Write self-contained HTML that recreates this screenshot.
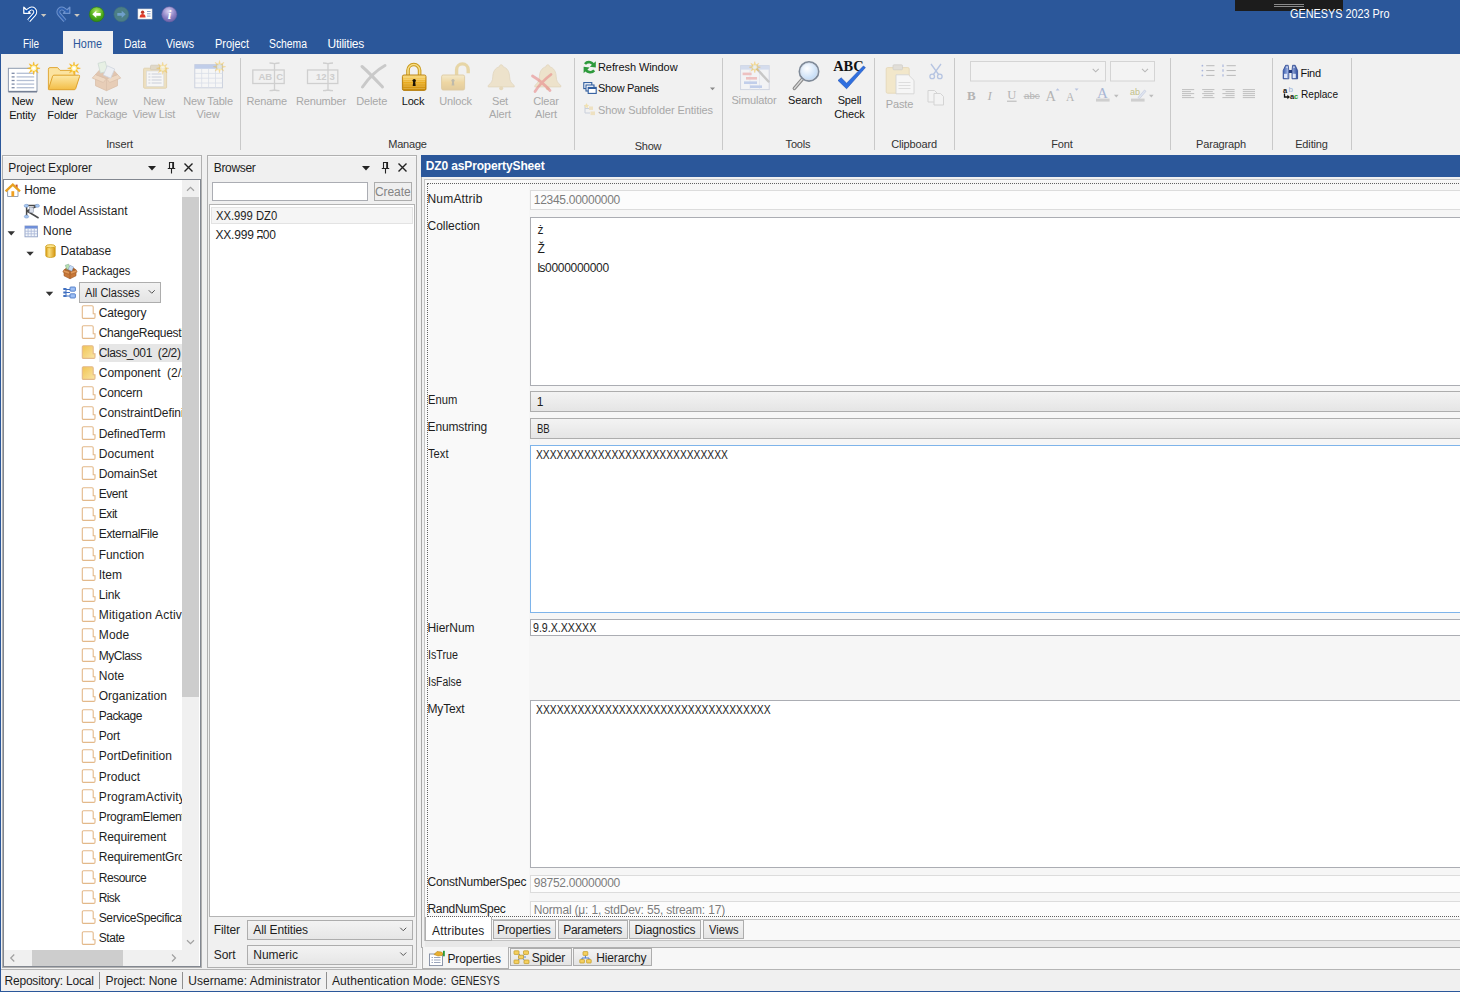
<!DOCTYPE html>
<html><head><meta charset="utf-8"><title>GENESYS 2023 Pro</title>
<style>
html,body{margin:0;padding:0}
body{width:1460px;height:992px;overflow:hidden;position:relative;background:#f0f0f0;font-family:"Liberation Sans","DejaVu Sans",sans-serif;font-size:12px;color:#1e1e1e}
div{position:absolute;box-sizing:border-box}
svg{position:absolute;overflow:visible}
.t{overflow:visible}
</style></head><body>
<div style="left:0px;top:0px;width:1460px;height:54px;background:#2b579a;"></div>
<div style="left:1234.5px;top:0px;width:108.5px;height:10.5px;background:#1c1c1c;"></div>
<div style="left:1274px;top:4px;width:30px;height:1px;background:#8a8a8a;"></div>
<div style="left:1274px;top:6px;width:30px;height:1px;background:#8a8a8a;"></div>
<div class="t" style="top:4.00px;height:20px;line-height:20px;color:#ffffff;font-size:12px;white-space:nowrap;transform:scaleX(0.9040);transform-origin:0 50%;left:1289.50px;">GENESYS 2023 Pro</div>
<div style="left:62.5px;top:31px;width:50.5px;height:24px;background:#f1f1f1;"></div>
<div class="t" style="top:33.50px;height:20px;line-height:20px;color:#fff;font-size:12px;white-space:nowrap;transform:scaleX(0.8275);transform-origin:0 50%;left:22.50px;">File</div>
<div class="t" style="top:33.50px;height:20px;line-height:20px;color:#2b579a;font-size:12px;white-space:nowrap;transform:scaleX(0.9060);transform-origin:0 50%;left:73.00px;">Home</div>
<div class="t" style="top:33.50px;height:20px;line-height:20px;color:#fff;font-size:12px;white-space:nowrap;transform:scaleX(0.8680);transform-origin:0 50%;left:123.50px;">Data</div>
<div class="t" style="top:33.50px;height:20px;line-height:20px;color:#fff;font-size:12px;white-space:nowrap;transform:scaleX(0.8807);transform-origin:0 50%;left:166.00px;">Views</div>
<div class="t" style="top:33.50px;height:20px;line-height:20px;color:#fff;font-size:12px;white-space:nowrap;transform:scaleX(0.9103);transform-origin:0 50%;left:214.50px;">Project</div>
<div class="t" style="top:33.50px;height:20px;line-height:20px;color:#fff;font-size:12px;white-space:nowrap;transform:scaleX(0.8632);transform-origin:0 50%;left:269.00px;">Schema</div>
<div class="t" style="top:33.50px;height:20px;line-height:20px;color:#fff;font-size:12px;white-space:nowrap;letter-spacing:-0.241px;left:327.50px;">Utilities</div>
<div style="left:0px;top:54px;width:1460px;height:101px;background:#f1f1f1;"></div>
<div style="left:240.0px;top:58px;width:1px;height:92px;background:#c9c9c9;"></div>
<div style="left:574.0px;top:58px;width:1px;height:92px;background:#c9c9c9;"></div>
<div style="left:722.0px;top:58px;width:1px;height:92px;background:#c9c9c9;"></div>
<div style="left:874.0px;top:58px;width:1px;height:92px;background:#c9c9c9;"></div>
<div style="left:953.5px;top:58px;width:1px;height:92px;background:#c9c9c9;"></div>
<div style="left:1170.0px;top:58px;width:1px;height:92px;background:#c9c9c9;"></div>
<div style="left:1272.0px;top:58px;width:1px;height:92px;background:#c9c9c9;"></div>
<div style="left:1350.5px;top:58px;width:1px;height:92px;background:#c9c9c9;"></div>
<div class="t" style="top:134.00px;height:20px;line-height:20px;color:#333333;font-size:11px;white-space:nowrap;letter-spacing:-0.133px;left:-30.50px;width:300px;text-align:center;">Insert</div>
<div class="t" style="top:134.00px;height:20px;line-height:20px;color:#333333;font-size:11px;white-space:nowrap;letter-spacing:-0.193px;left:257.50px;width:300px;text-align:center;">Manage</div>
<div class="t" style="top:136.00px;height:20px;line-height:20px;color:#333333;font-size:11px;white-space:nowrap;letter-spacing:-0.200px;left:498.00px;width:300px;text-align:center;">Show</div>
<div class="t" style="top:134.00px;height:20px;line-height:20px;color:#333333;font-size:11px;white-space:nowrap;letter-spacing:-0.149px;left:648.00px;width:300px;text-align:center;">Tools</div>
<div class="t" style="top:134.00px;height:20px;line-height:20px;color:#333333;font-size:11px;white-space:nowrap;letter-spacing:-0.152px;left:764.00px;width:300px;text-align:center;">Clipboard</div>
<div class="t" style="top:134.00px;height:20px;line-height:20px;color:#333333;font-size:11px;white-space:nowrap;letter-spacing:-0.160px;left:912.00px;width:300px;text-align:center;">Font</div>
<div class="t" style="top:134.00px;height:20px;line-height:20px;color:#333333;font-size:11px;white-space:nowrap;letter-spacing:-0.166px;left:1071.00px;width:300px;text-align:center;">Paragraph</div>
<div class="t" style="top:134.00px;height:20px;line-height:20px;color:#333333;font-size:11px;white-space:nowrap;letter-spacing:-0.140px;left:1161.50px;width:300px;text-align:center;">Editing</div>
<div class="t" style="top:91.00px;height:20px;line-height:20px;color:#111;font-size:11px;white-space:nowrap;letter-spacing:-0.213px;left:-127.50px;width:300px;text-align:center;">New</div>
<div class="t" style="top:105.00px;height:20px;line-height:20px;color:#111;font-size:11px;white-space:nowrap;letter-spacing:-0.133px;left:-127.50px;width:300px;text-align:center;">Entity</div>
<div class="t" style="top:91.00px;height:20px;line-height:20px;color:#111;font-size:11px;white-space:nowrap;letter-spacing:-0.213px;left:-87.50px;width:300px;text-align:center;">New</div>
<div class="t" style="top:105.00px;height:20px;line-height:20px;color:#111;font-size:11px;white-space:nowrap;letter-spacing:-0.151px;left:-87.50px;width:300px;text-align:center;">Folder</div>
<div class="t" style="top:91.00px;height:20px;line-height:20px;color:#a8a8a8;font-size:11px;white-space:nowrap;letter-spacing:-0.213px;left:-43.50px;width:300px;text-align:center;">New</div>
<div class="t" style="top:104.20px;height:20px;line-height:20px;color:#a8a8a8;font-size:11px;white-space:nowrap;letter-spacing:-0.178px;left:-43.50px;width:300px;text-align:center;">Package</div>
<div class="t" style="top:91.00px;height:20px;line-height:20px;color:#a8a8a8;font-size:11px;white-space:nowrap;letter-spacing:-0.213px;left:4.00px;width:300px;text-align:center;">New</div>
<div class="t" style="top:104.20px;height:20px;line-height:20px;color:#a8a8a8;font-size:11px;white-space:nowrap;letter-spacing:-0.142px;left:4.00px;width:300px;text-align:center;">View List</div>
<div class="t" style="top:91.00px;height:20px;line-height:20px;color:#a8a8a8;font-size:11px;white-space:nowrap;letter-spacing:-0.165px;left:58.00px;width:300px;text-align:center;">New Table</div>
<div class="t" style="top:104.20px;height:20px;line-height:20px;color:#a8a8a8;font-size:11px;white-space:nowrap;letter-spacing:-0.172px;left:58.00px;width:300px;text-align:center;">View</div>
<div class="t" style="top:91.00px;height:20px;line-height:20px;color:#a8a8a8;font-size:11px;white-space:nowrap;letter-spacing:-0.202px;left:116.75px;width:300px;text-align:center;">Rename</div>
<div class="t" style="top:91.00px;height:20px;line-height:20px;color:#a8a8a8;font-size:11px;white-space:nowrap;letter-spacing:-0.187px;left:171.00px;width:300px;text-align:center;">Renumber</div>
<div class="t" style="top:91.00px;height:20px;line-height:20px;color:#a8a8a8;font-size:11px;white-space:nowrap;letter-spacing:-0.154px;left:221.75px;width:300px;text-align:center;">Delete</div>
<div class="t" style="top:91.00px;height:20px;line-height:20px;color:#111;font-size:11px;white-space:nowrap;letter-spacing:-0.169px;left:263.00px;width:300px;text-align:center;">Lock</div>
<div class="t" style="top:91.00px;height:20px;line-height:20px;color:#a8a8a8;font-size:11px;white-space:nowrap;letter-spacing:-0.163px;left:305.60px;width:300px;text-align:center;">Unlock</div>
<div class="t" style="top:91.00px;height:20px;line-height:20px;color:#a8a8a8;font-size:11px;white-space:nowrap;letter-spacing:-0.160px;left:350.00px;width:300px;text-align:center;">Set</div>
<div class="t" style="top:104.20px;height:20px;line-height:20px;color:#a8a8a8;font-size:11px;white-space:nowrap;letter-spacing:-0.132px;left:350.00px;width:300px;text-align:center;">Alert</div>
<div class="t" style="top:91.00px;height:20px;line-height:20px;color:#a8a8a8;font-size:11px;white-space:nowrap;letter-spacing:-0.153px;left:396.00px;width:300px;text-align:center;">Clear</div>
<div class="t" style="top:104.20px;height:20px;line-height:20px;color:#a8a8a8;font-size:11px;white-space:nowrap;letter-spacing:-0.132px;left:396.00px;width:300px;text-align:center;">Alert</div>
<div class="t" style="top:57.00px;height:20px;line-height:20px;color:#111;font-size:11px;white-space:nowrap;letter-spacing:-0.085px;left:598.00px;">Refresh Window</div>
<div class="t" style="top:78.25px;height:20px;line-height:20px;color:#111;font-size:11px;white-space:nowrap;letter-spacing:-0.314px;left:598.00px;">Show Panels</div>
<div class="t" style="top:99.50px;height:20px;line-height:20px;color:#a8a8a8;font-size:11px;white-space:nowrap;letter-spacing:-0.078px;left:598.00px;">Show Subfolder Entities</div>
<div class="t" style="top:90.00px;height:20px;line-height:20px;color:#a8a8a8;font-size:11px;white-space:nowrap;letter-spacing:-0.150px;left:604.00px;width:300px;text-align:center;">Simulator</div>
<div class="t" style="top:90.00px;height:20px;line-height:20px;color:#111;font-size:11px;white-space:nowrap;letter-spacing:-0.169px;left:655.00px;width:300px;text-align:center;">Search</div>
<div class="t" style="top:90.00px;height:20px;line-height:20px;color:#111;font-size:11px;white-space:nowrap;letter-spacing:-0.142px;left:699.50px;width:300px;text-align:center;">Spell</div>
<div class="t" style="top:103.50px;height:20px;line-height:20px;color:#111;font-size:11px;white-space:nowrap;letter-spacing:-0.181px;left:699.50px;width:300px;text-align:center;">Check</div>
<div class="t" style="top:94.00px;height:20px;line-height:20px;color:#a8a8a8;font-size:11px;white-space:nowrap;letter-spacing:-0.164px;left:749.50px;width:300px;text-align:center;">Paste</div>
<div class="t" style="top:63.00px;height:20px;line-height:20px;color:#111;font-size:11px;white-space:nowrap;letter-spacing:-0.287px;left:1300.50px;">Find</div>
<div class="t" style="top:84.00px;height:20px;line-height:20px;color:#111;font-size:11px;white-space:nowrap;transform:scaleX(0.9168);transform-origin:0 50%;left:1300.50px;">Replace</div>
<svg style="left:0;top:0" width="1460" height="155" viewBox="0 0 1460 155"><defs>
<linearGradient id="gold" x1="0" y1="0" x2="0" y2="1"><stop offset="0" stop-color="#fbe08a"/><stop offset="0.5" stop-color="#e9a91c"/><stop offset="1" stop-color="#c98a0c"/></linearGradient>
<linearGradient id="fold" x1="0" y1="0" x2="0" y2="1"><stop offset="0" stop-color="#fde9a8"/><stop offset="1" stop-color="#f3bd45"/></linearGradient>
<radialGradient id="grn" cx="0.5" cy="0.3" r="0.7"><stop offset="0" stop-color="#b6e86a"/><stop offset="0.6" stop-color="#4fae1c"/><stop offset="1" stop-color="#2f8a12"/></radialGradient>
<radialGradient id="pur" cx="0.45" cy="0.3" r="0.7"><stop offset="0" stop-color="#d9d2f2"/><stop offset="0.6" stop-color="#8f84c6"/><stop offset="1" stop-color="#6d62a8"/></radialGradient>
<radialGradient id="lens" cx="0.4" cy="0.35" r="0.7"><stop offset="0" stop-color="#ffffff"/><stop offset="1" stop-color="#b9d6f5"/></radialGradient>
</defs><g opacity="1" fill="none" stroke-linejoin="round"><path d="M28.700 20.700L34.300 14.400A3.500 3.500 0 0 0 29.200 9.600L27.500 11" stroke="#fff" stroke-width="3.900"/><polygon points="23.800,7.300 23.800,13.300 30.200,13.300" fill="#0d4ca8" stroke="#fff" stroke-width="1.300"/><path d="M28.700 20.700L34.300 14.400A3.500 3.500 0 0 0 29.200 9.600L26.500 11.500" stroke="#0d4ca8" stroke-width="1.900"/></g><g transform="translate(93.6,0) scale(-1,1)" opacity="1" fill="none" stroke-linejoin="round"><path d="M28.700 20.700L34.300 14.400A3.500 3.500 0 0 0 29.200 9.600L27.500 11" stroke="#6d92cd" stroke-width="3.900"/><polygon points="23.800,7.300 23.800,13.300 30.200,13.300" fill="#2f60ae" stroke="#6d92cd" stroke-width="1.300"/><path d="M28.700 20.700L34.300 14.400A3.500 3.500 0 0 0 29.200 9.600L26.500 11.500" stroke="#2f60ae" stroke-width="1.900"/></g><polygon points="40.900,13.900 46.400,13.900 43.650,17" fill="#cbc7bf"/><polygon points="74.200,13.900 79.800,13.900 77,17" fill="#cbc7bf"/><circle cx="96.7" cy="14.3" r="7.4" fill="url(#grn)" stroke="#2c7a12" stroke-width="0.6"/><path d="M92.3 14.3l4-3.6v2.2h4.4v2.8h-4.4v2.2z" fill="#fff"/><circle cx="121.3" cy="14.3" r="7.4" fill="#4b7e86" stroke="#3f6f7c" stroke-width="0.6"/><path d="M125.7 14.3l-4-3.6v2.2h-4.4v2.8h4.4v2.2z" fill="#6e9fca"/><rect x="138" y="9" width="14" height="10" fill="#fff" stroke="#d8d8d8" stroke-width="0.6"/><circle cx="142.6" cy="12.2" r="1.7" fill="#c0392b"/><path d="M139.6 17.6c0-2.6 1.2-3.6 3-3.6s3 1 3 3.6z" fill="#e03a2a"/><path d="M147 11.5h3.6M147 13.8h3.6M147 16.1h3.6" stroke="#8aa0c8" stroke-width="1"/><circle cx="169.3" cy="14.3" r="7.6" fill="url(#pur)" stroke="#6a60a0" stroke-width="0.5"/><text x="169.6" y="19" font-family="Liberation Serif,serif" font-size="13" font-style="italic" font-weight="bold" fill="#fff" text-anchor="middle">i</text><rect x="8.4" y="68.3" width="28.6" height="23" fill="#fff" stroke="#8e9bb0" stroke-width="1"/><path d="M8.4 91.8h28.6" stroke="#6f7a90" stroke-width="1.4"/><path d="M11.6 73.3h3" stroke="#7f8ca8" stroke-width="1.3"/><path d="M16.6 73.3h17.6" stroke="#b4bfd4" stroke-width="1.3"/><path d="M11.6 76.89999999999999h3" stroke="#7f8ca8" stroke-width="1.3"/><path d="M16.6 76.89999999999999h17.6" stroke="#b4bfd4" stroke-width="1.3"/><path d="M11.6 80.5h3" stroke="#7f8ca8" stroke-width="1.3"/><path d="M16.6 80.5h17.6" stroke="#b4bfd4" stroke-width="1.3"/><path d="M11.6 84.1h3" stroke="#7f8ca8" stroke-width="1.3"/><path d="M16.6 84.1h17.6" stroke="#b4bfd4" stroke-width="1.3"/><path d="M11.6 87.7h3" stroke="#7f8ca8" stroke-width="1.3"/><path d="M16.6 87.7h17.6" stroke="#b4bfd4" stroke-width="1.3"/><g opacity="1"><polygon points="33.70,61.90 34.73,65.82 38.23,63.77 36.18,67.27 40.10,68.30 36.18,69.33 38.23,72.83 34.73,70.78 33.70,74.70 32.67,70.78 29.17,72.83 31.22,69.33 27.30,68.30 31.22,67.27 29.17,63.77 32.67,65.82" fill="#f9c623" stroke="#f0a818" stroke-width="0.4"/><circle cx="33.7" cy="68.3" r="2.69" fill="#fff7c0"/><circle cx="33.7" cy="68.3" r="1.41" fill="#fff"/></g><path d="M48.4 88.6V69.2a1.6 1.6 0 0 1 1.6-1.6h7.6l2.4 2.8h13.4a1.4 1.4 0 0 1 1.4 1.4v3.4" fill="#fbe3a0" stroke="#e0a838" stroke-width="1"/><path d="M48.4 89.4l4.2-13.2a1.5 1.5 0 0 1 1.4-1h24.6a1 1 0 0 1 .95 1.3l-3.9 12.2a1.5 1.5 0 0 1-1.4 1H49.2a.8 .8 0 0 1-.8-.3z" fill="url(#fold)" stroke="#dfa22c" stroke-width="1"/><g opacity="1"><polygon points="74.00,61.90 75.03,65.82 78.53,63.77 76.48,67.27 80.40,68.30 76.48,69.33 78.53,72.83 75.03,70.78 74.00,74.70 72.97,70.78 69.47,72.83 71.52,69.33 67.60,68.30 71.52,67.27 69.47,63.77 72.97,65.82" fill="#f9c623" stroke="#f0a818" stroke-width="0.4"/><circle cx="74" cy="68.3" r="2.69" fill="#fff7c0"/><circle cx="74" cy="68.3" r="1.41" fill="#fff"/></g><g opacity="0.38"><path d="M95.5 74.5l11 4.2 11-4.2v11.2l-11 5-11-5z" fill="#d9935a" stroke="#b8733c" stroke-width="0.8"/><path d="M106.5 78.7v12" stroke="#b8733c" stroke-width="0.8"/><path d="M95.5 74.5l-3.2 3.6 11 4.4 3.2-3.8zM117.5 74.5l3.2 3.6-11 4.4-3.2-3.8z" fill="#eab07a" stroke="#b8733c" stroke-width="0.8"/><path d="M95.5 74.5l4-4.4 7 2.6 7-2.6 4 4.4-11 4.2z" fill="#c88048" stroke="#b8733c" stroke-width="0.8"/><rect x="99" y="62.5" width="7.5" height="10" fill="#d8f0d0" stroke="#8fb0a0" stroke-width="0.7" transform="rotate(-14 102 67)"/><rect x="105" y="67" width="8" height="10" fill="#e8eef8" stroke="#9aa8c0" stroke-width="0.7" transform="rotate(24 109 72)"/></g><g opacity="0.4"><rect x="143.6" y="68.2" width="23" height="20" rx="1" fill="#e8c878" stroke="#c8a04c" stroke-width="0.9"/><rect x="150.5" y="65.2" width="9" height="4.6" rx="1" fill="#c9b48a" stroke="#a08a5c" stroke-width="0.7"/><rect x="146.4" y="71" width="17.4" height="15.4" fill="#fff" stroke="#b0b0b0" stroke-width="0.6"/><path d="M148.4 74h2M151.6 74h10M148.4 77h2M151.6 77h10M148.4 80h2M151.6 80h10M148.4 83h2M151.6 83h10" stroke="#8f9bb5" stroke-width="1"/></g><g opacity="0.45"><polygon points="162.70,62.10 163.70,65.89 167.08,63.92 165.11,67.30 168.90,68.30 165.11,69.30 167.08,72.68 163.70,70.71 162.70,74.50 161.70,70.71 158.32,72.68 160.29,69.30 156.50,68.30 160.29,67.30 158.32,63.92 161.70,65.89" fill="#f9c623" stroke="#f0a818" stroke-width="0.4"/><circle cx="162.7" cy="68.3" r="2.60" fill="#fff7c0"/><circle cx="162.7" cy="68.3" r="1.36" fill="#fff"/></g><g opacity="0.42"><rect x="194.8" y="64.6" width="27.6" height="23.2" fill="#fff" stroke="#8f9ec0" stroke-width="0.9"/><rect x="194.8" y="64.6" width="27.6" height="4.2" fill="#7f9ee0"/><path d="M194.8 73.4h27.6M194.8 78.2h27.6M194.8 83h27.6M201.7 68.8v19M208.6 68.8v19M215.5 68.8v19" stroke="#b8c4dc" stroke-width="0.8"/></g><g opacity="0.45"><polygon points="219.50,60.50 220.50,64.29 223.88,62.32 221.91,65.70 225.70,66.70 221.91,67.70 223.88,71.08 220.50,69.11 219.50,72.90 218.50,69.11 215.12,71.08 217.09,67.70 213.30,66.70 217.09,65.70 215.12,62.32 218.50,64.29" fill="#f9c623" stroke="#f0a818" stroke-width="0.4"/><circle cx="219.5" cy="66.7" r="2.60" fill="#fff7c0"/><circle cx="219.5" cy="66.7" r="1.36" fill="#fff"/></g><g stroke="#cfcfcf" fill="none" stroke-width="1.3"><rect x="252.8" y="70" width="31.399999999999977" height="13.5"/><path d="M274.5 63.6v26.4M274.5 63.6c-1.5-.4-3-.6-5-.6M274.5 63.6c1.5-.4 3-.6 5-.6M274.5 90c-1.5 .4-3 .6-5 .6M274.5 90c1.5 .4 3 .6 5 .6"/></g><g stroke="#cfcfcf" fill="none" stroke-width="1.3"><rect x="307.5" y="70" width="30.30000000000001" height="13.5"/><path d="M328 63.6v26.4M328 63.6c-1.5-.4-3-.6-5-.6M328 63.6c1.5-.4 3-.6 5-.6M328 90c-1.5 .4-3 .6-5 .6M328 90c1.5 .4 3 .6 5 .6"/></g><text x="258.5" y="80.4" font-size="9.5" font-weight="bold" fill="#cdcdcd" font-family="Liberation Sans,sans-serif">AB</text><text x="276.2" y="80.4" font-size="9.5" font-weight="bold" fill="#cdcdcd" font-family="Liberation Sans,sans-serif">C</text><text x="316" y="80.4" font-size="9.5" font-weight="bold" fill="#cdcdcd" font-family="Liberation Sans,sans-serif">12</text><text x="329.6" y="80.4" font-size="9.5" font-weight="bold" fill="#cdcdcd" font-family="Liberation Sans,sans-serif">3</text><path d="M362 66.5c7 6 13 12.5 20.5 20.5M385 65.5c-9 5-16 12-22.5 21.5" stroke="#c9c9c9" stroke-width="3" stroke-linecap="round" fill="none"/><path d="M408 75.5v-5.2a5.8 5.8 0 0 1 11.6 0v5.2" fill="none" stroke="#c99a1c" stroke-width="3.6"/><path d="M408 75.5v-5.2a5.8 5.8 0 0 1 11.6 0v5.2" fill="none" stroke="#f7dd86" stroke-width="1.6"/><rect x="402.4" y="75" width="23.6" height="15.4" rx="1.6" fill="url(#gold)" stroke="#b47a08" stroke-width="0.9"/><path d="M403.4 77.3h21.6" stroke="#f9e29a" stroke-width="0.5" opacity="0.8"/><path d="M403.4 79.5h21.6" stroke="#f9e29a" stroke-width="0.5" opacity="0.8"/><path d="M403.4 81.7h21.6" stroke="#f9e29a" stroke-width="0.5" opacity="0.8"/><path d="M403.4 83.89999999999999h21.6" stroke="#f9e29a" stroke-width="0.5" opacity="0.8"/><path d="M403.4 86.1h21.6" stroke="#f9e29a" stroke-width="0.5" opacity="0.8"/><path d="M403.4 88.3h21.6" stroke="#f9e29a" stroke-width="0.5" opacity="0.8"/><circle cx="414.2" cy="80.6" r="1.7" fill="#1a1205"/><path d="M413.3 81h1.8l.6 5h-3z" fill="#1a1205"/><g opacity="0.36"><path d="M456.6 75.5v-5.8a5.8 5.8 0 0 1 11.6 0v3.6" fill="none" stroke="#d8a828" stroke-width="3.4"/><rect x="441.6" y="75" width="23" height="15" rx="1.6" fill="url(#gold)" stroke="#c08a18" stroke-width="0.9"/><circle cx="453" cy="80.6" r="1.6" fill="#6a5a30"/><path d="M452.2 81h1.6l.6 4.6h-2.8z" fill="#6a5a30"/></g><g opacity="0.42"><path d="M501.2 64.8c1.2 0 1.8 .9 1.8 1.9c4.6 1.4 6.4 5.2 6.6 10.2c.1 4 1.6 6.2 4.6 8.6v1.4h-26v-1.4c3-2.4 4.5-4.6 4.6-8.6c.2-5 2-8.8 6.6-10.2c0-1 .6-1.900 1.800-1.900z" fill="#e8cf98" stroke="#cdb078" stroke-width="0.8"/><circle cx="501.2" cy="88.300" r="2" fill="#d8b870"/></g><g opacity="0.42"><path d="M547.8 64.8c1.2 0 1.8 .9 1.8 1.9c4.6 1.4 6.4 5.2 6.6 10.2c.1 4 1.6 6.2 4.6 8.6v1.4h-26v-1.4c3-2.4 4.5-4.6 4.6-8.6c.2-5 2-8.8 6.6-10.2c0-1 .6-1.900 1.800-1.900z" fill="#e8cf98" stroke="#cdb078" stroke-width="0.8"/><circle cx="547.8" cy="88.300" r="2" fill="#d8b870"/></g><path d="M532.5 76c6 3.500 12 8.500 17.500 14.500M551 74.500c-6 4.500-11.500 10-16 17" stroke="#e88888" stroke-width="2.800" stroke-linecap="round" fill="none" opacity="0.600"/><path d="M593.800 66.200a5 5 0 0 0-8.800-2.200" fill="none" stroke="#2e9a3c" stroke-width="2.600"/><polygon points="595.800,61.200 595.800,67.600 589.800,66.800" fill="#2e9a3c"/><path d="M585.400 68.200a5 5 0 0 0 8.800 2.200" fill="none" stroke="#2e9a3c" stroke-width="2.600"/><polygon points="583.600,73.200 583.600,66.800 589.600,67.600" fill="#2e9a3c"/><g fill="#fff" stroke="#2f5c9e" stroke-width="1.100"><rect x="583.800" y="82.600" width="8" height="6"/><rect x="586" y="85" width="8" height="6"/><rect x="588.200" y="87.400" width="8" height="6"/></g><path d="M588.200 88.200h8" stroke="#2f5c9e" stroke-width="1.600"/><polygon points="710,87.400 715,87.400 712.500,90.200" fill="#8a8a8a"/><g opacity="0.320"><path d="M585 105v8h5M585 108.500h4" stroke="#7a8cb0" stroke-width="1" fill="none"/><rect x="589" y="106.500" width="4" height="3.400" fill="#e8c060"/><rect x="590.500" y="111.500" width="4.500" height="3.600" fill="#e8c060"/><path d="M586.500 103l.8 1.800 1.800.4-1.400 1.200.3 1.800-1.500-1-1.500 1 .3-1.800-1.400-1.200 1.800-.4z" fill="#f0c030"/></g><g opacity="0.400"><rect x="740.600" y="65.600" width="28.600" height="24" fill="#f4f6fb" stroke="#9aa8c8" stroke-width="0.900"/><rect x="740.600" y="65.600" width="28.600" height="4" fill="#a9bde8"/><path d="M750 69.600v20M759.500 69.600v20" stroke="#c8d2e8" stroke-width="0.700"/><rect x="742.600" y="72.600" width="9" height="2.600" fill="#e87a7a"/><rect x="746" y="77" width="11" height="2.600" fill="#e87a7a"/><rect x="744" y="81.400" width="13" height="2.600" fill="#7a9be0"/><rect x="750" y="85.400" width="12" height="2.600" fill="#7a9be0"/><path d="M757 69l11.500 12.500" stroke="#8a8a8a" stroke-width="2.400" stroke-linecap="round"/></g><g opacity="0.5"><polygon points="754.80,61.60 755.70,65.03 758.76,63.24 756.97,66.30 760.40,67.20 756.97,68.10 758.76,71.16 755.70,69.37 754.80,72.80 753.90,69.37 750.84,71.16 752.63,68.10 749.20,67.20 752.63,66.30 750.84,63.24 753.90,65.03" fill="#f9c623" stroke="#f0a818" stroke-width="0.4"/><circle cx="754.8" cy="67.2" r="2.35" fill="#fff7c0"/><circle cx="754.8" cy="67.2" r="1.23" fill="#fff"/></g><path d="M802.600 78.800l-8.200 9.600" stroke="#8a8a8a" stroke-width="3.600" stroke-linecap="round"/><path d="M802.600 78.800l-8.200 9.600" stroke="#d8d8d8" stroke-width="1.400" stroke-linecap="round"/><circle cx="809" cy="71.400" r="9.600" fill="url(#lens)" stroke="#7f8a98" stroke-width="1.800"/><circle cx="809" cy="71.400" r="8.400" fill="none" stroke="#d5dde8" stroke-width="0.800"/><text x="833.200" y="71.400" font-family="Liberation Serif,serif" font-weight="bold" font-size="13.800" fill="#111" textLength="30.400" lengthAdjust="spacingAndGlyphs">ABC</text><path d="M838 80.400l3.200-2.600 5.400 5.400 16.800-17.200 2 1.600-18.800 21.200z" fill="#2f6fe0" stroke="#1f4fb0" stroke-width="0.600"/><g opacity="0.380"><rect x="886.200" y="67.600" width="23" height="25.600" rx="1.400" fill="#f4d98c" stroke="#d4b060" stroke-width="0.900"/><rect x="893" y="64.800" width="9.500" height="5" rx="1" fill="#c8c0b0" stroke="#9a9488" stroke-width="0.700"/><path d="M896 74.800h12.400l5.600 5.600v13.400h-18z" fill="#fff" stroke="#a0a0a0" stroke-width="0.800"/><path d="M898.500 82.500h12M898.500 85.500h12M898.500 88.500h12" stroke="#b8b8b8" stroke-width="0.900"/></g><g opacity="0.450" fill="none" stroke="#6f8fd0" stroke-width="1.300"><path d="M931 64l7.600 10.500M941 64l-7.600 10.500"/><circle cx="932.200" cy="76.400" r="2.300"/><circle cx="939.800" cy="76.400" r="2.300"/></g><g opacity="0.500" fill="#f6f6f6" stroke="#b8b8b8" stroke-width="1"><path d="M928 90.500h6.500l3 3v8.500h-9.500z"/><path d="M934 93.500h6.500l3 3v8.500h-9.500z"/></g><rect x="970.500" y="61.500" width="135" height="19.500" fill="#f3f3f3" stroke="#d4d4d4" stroke-width="1"/><rect x="1110.500" y="61.500" width="44" height="19.500" fill="#f3f3f3" stroke="#d4d4d4" stroke-width="1"/><polyline points="1092.700,68.800 1095.700,71.800 1098.700,68.800" fill="none" stroke="#b8b8b8" stroke-width="1.100"/><polyline points="1142,68.800 1145,71.800 1148,68.800" fill="none" stroke="#b8b8b8" stroke-width="1.100"/><text x="967" y="99.600" font-family="Liberation Serif,serif" font-weight="bold" font-size="13" fill="#b4b4b4">B</text><text x="987.500" y="99.600" font-family="Liberation Serif,serif" font-style="italic" font-size="13" fill="#b4b4b4">I</text><text x="1007.200" y="99" font-family="Liberation Serif,serif" font-size="12.500" fill="#b4b4b4">U</text><path d="M1007 101.200h9.600" stroke="#b4b4b4" stroke-width="1"/><text x="1024" y="99.400" font-family="Liberation Sans,sans-serif" font-size="9.600" fill="#b4b4b4" textLength="15.600" lengthAdjust="spacingAndGlyphs">abc</text><path d="M1023.600 96.400h16.400" stroke="#b4b4b4" stroke-width="0.900"/><text x="1045.600" y="101" font-family="Liberation Serif,serif" font-size="14.500" fill="#b4b4b4">A</text><polygon points="1055.600,90.400 1059.600,90.400 1057.600,88.200" fill="#b8c4e0"/><text x="1066" y="101" font-family="Liberation Serif,serif" font-size="11.500" fill="#b4b4b4">A</text><polygon points="1074.600,88.600 1078.600,88.600 1076.600,90.800" fill="#b8c4e0"/><text x="1097" y="97.800" font-family="Liberation Serif,serif" font-size="15" fill="#a9b6d4">A</text><rect x="1096" y="98.600" width="13.600" height="3" fill="#cfcfcf"/><polygon points="1114,94.800 1118.600,94.800 1116.300,97.400" fill="#bcbcbc"/><text x="1130" y="94.600" font-family="Liberation Sans,sans-serif" font-size="9" fill="#c2c08a">ab</text><path d="M1138 97.500l6.500-7.500 1.500 1.300-6.500 7.500z" fill="#dfe4f0" stroke="#c0c8dc" stroke-width="0.600"/><rect x="1131" y="98.600" width="13.600" height="3" fill="#cfcfcf"/><polygon points="1149,94.800 1153.600,94.800 1151.300,97.400" fill="#bcbcbc"/><circle cx="1202.400" cy="65.7" r="0.900" fill="#a9b6dc"/><path d="M1206.200 65.7h8.300" stroke="#b9b9b9" stroke-width="1"/><path d="M1223 64.5v2.4" stroke="#a9b6dc" stroke-width="1.200"/><path d="M1226.600 65.7h9.200" stroke="#b9b9b9" stroke-width="1"/><circle cx="1202.400" cy="70.55" r="0.900" fill="#a9b6dc"/><path d="M1206.200 70.55h8.300" stroke="#b9b9b9" stroke-width="1"/><path d="M1223 69.35v2.4" stroke="#a9b6dc" stroke-width="1.200"/><path d="M1226.600 70.55h9.200" stroke="#b9b9b9" stroke-width="1"/><circle cx="1202.400" cy="75.4" r="0.900" fill="#a9b6dc"/><path d="M1206.200 75.4h8.300" stroke="#b9b9b9" stroke-width="1"/><path d="M1223 74.2v2.4" stroke="#a9b6dc" stroke-width="1.200"/><path d="M1226.600 75.4h9.200" stroke="#b9b9b9" stroke-width="1"/><path d="M1182.0 89.6h12.2" stroke="#b9b9b9" stroke-width="0.900"/><path d="M1182.0 91.6h9.0" stroke="#b9b9b9" stroke-width="0.900"/><path d="M1182.0 93.6h12.2" stroke="#b9b9b9" stroke-width="0.900"/><path d="M1182.0 95.6h9.0" stroke="#b9b9b9" stroke-width="0.900"/><path d="M1182.0 97.6h12.2" stroke="#b9b9b9" stroke-width="0.900"/><path d="M1202.2 89.6h12.2" stroke="#b9b9b9" stroke-width="0.900"/><path d="M1203.8 91.6h9.0" stroke="#b9b9b9" stroke-width="0.900"/><path d="M1202.2 93.6h12.2" stroke="#b9b9b9" stroke-width="0.900"/><path d="M1203.8 95.6h9.0" stroke="#b9b9b9" stroke-width="0.900"/><path d="M1202.2 97.6h12.2" stroke="#b9b9b9" stroke-width="0.900"/><path d="M1222.4 89.6h12.2" stroke="#b9b9b9" stroke-width="0.900"/><path d="M1225.6 91.6h9.0" stroke="#b9b9b9" stroke-width="0.900"/><path d="M1222.4 93.6h12.2" stroke="#b9b9b9" stroke-width="0.900"/><path d="M1225.6 95.6h9.0" stroke="#b9b9b9" stroke-width="0.900"/><path d="M1222.4 97.6h12.2" stroke="#b9b9b9" stroke-width="0.900"/><path d="M1242.8 89.6h12.2" stroke="#b9b9b9" stroke-width="0.900"/><path d="M1242.8 91.6h12.2" stroke="#b9b9b9" stroke-width="0.900"/><path d="M1242.8 93.6h12.2" stroke="#b9b9b9" stroke-width="0.900"/><path d="M1242.8 95.6h12.2" stroke="#b9b9b9" stroke-width="0.900"/><path d="M1242.8 97.6h12.2" stroke="#b9b9b9" stroke-width="0.900"/><defs><linearGradient id="bino" x1="0" y1="0" x2="1" y2="0"><stop offset="0" stop-color="#3a5cb0"/><stop offset="0.450" stop-color="#c9d8f6"/><stop offset="1" stop-color="#2c4a9c"/></linearGradient></defs><path d="M1285.600 65.300h2.600l0.600 5.200v8.300h-5.600v-8.300zM1292.600 65.300h2.600l2.400 5.200v8.300h-5.600v-8.300z" fill="url(#bino)" stroke="#2a448e" stroke-width="0.800" stroke-linejoin="round"/><rect x="1288.800" y="70" width="3.200" height="3" fill="#22387c"/><rect x="1284" y="73.800" width="3" height="4.200" fill="#f2f6ff" opacity="0.850"/><rect x="1292.800" y="73.800" width="3" height="4.200" fill="#f2f6ff" opacity="0.850"/><path d="M1286 67.200h2M1293 67.200h2" stroke="#e8eeff" stroke-width="0.800"/><text x="1283" y="92.600" font-family="Liberation Sans,sans-serif" font-size="7.500" font-weight="bold" fill="#111">a</text><text x="1288.500" y="92" font-family="Liberation Sans,sans-serif" font-size="8" fill="#9ab0d8">b</text><path d="M1284.500 93.500v3.500h3.500" fill="none" stroke="#111" stroke-width="1.300"/><polygon points="1287.400,94.800 1290,97 1287.400,99.200" fill="#111"/><text x="1290" y="99.400" font-family="Liberation Sans,sans-serif" font-size="7.500" font-weight="bold" fill="#111">a</text><text x="1294" y="99.400" font-family="Liberation Sans,sans-serif" font-size="7.500" font-weight="bold" fill="#2a9a2a">c</text></svg>
<div style="left:0px;top:54px;width:1px;height:938px;background:#2b579a;"></div>
<div style="left:0px;top:990.5px;width:1460px;height:1.5px;background:#2b579a;"></div>
<div style="left:2px;top:155px;width:200px;height:813px;border:1px solid #b0b0b0;background:#f0f0f0;"></div>
<div style="left:3px;top:156px;width:198px;height:1px;background:#fafafa;"></div>
<div class="t" style="top:157.50px;height:20px;line-height:20px;color:#1e1e1e;font-size:12px;white-space:nowrap;letter-spacing:-0.101px;left:8.25px;">Project Explorer</div>
<div style="left:3px;top:179px;width:198px;height:788px;border:1px solid #828790;background:#fff;"></div>
<div style="left:182px;top:180px;width:17px;height:770px;background:#f0f0f0;"></div>
<div style="left:182px;top:197px;width:17px;height:500px;background:#cdcdcd;"></div>
<div style="left:4px;top:950px;width:195px;height:16px;background:#f0f0f0;"></div>
<div style="left:32px;top:950px;width:90.5px;height:16px;background:#cdcdcd;"></div>
<svg style="left:0;top:0" width="1" height="1"><polyline points="187.0,190.75 190.5,187.25 194.0,190.75" fill="none" stroke="#a0a0a0" stroke-width="1.2"/></svg>
<svg style="left:0;top:0" width="1" height="1"><polyline points="187.0,940.25 190.5,943.75 194.0,940.25" fill="none" stroke="#a0a0a0" stroke-width="1.2"/></svg>
<svg style="left:0;top:0" width="1" height="1"><polyline points="14.25,954.5 10.75,958 14.25,961.5" fill="none" stroke="#a0a0a0" stroke-width="1.2"/></svg>
<svg style="left:0;top:0" width="1" height="1"><polyline points="172.0,954.5 175.5,958 172.0,961.5" fill="none" stroke="#a0a0a0" stroke-width="1.2"/></svg>
<div style="left:4px;top:180px;width:177.5px;height:770px;overflow:hidden;"><div style="left:-4px;top:-180px;width:300px;height:992px;">
<svg style="left:0;top:0" width="300" height="400" viewBox="0 0 300 400"><defs><linearGradient id="cyl" x1="0" y1="0" x2="1" y2="0"><stop offset="0" stop-color="#d89a10"/><stop offset="0.350" stop-color="#fbe080"/><stop offset="1" stop-color="#d49410"/></linearGradient><linearGradient id="fgr" x1="0" y1="0" x2="1" y2="1"><stop offset="0" stop-color="#f1c453"/><stop offset="1" stop-color="#fae6a8"/></linearGradient></defs><path d="M7.600 190.500v6h10.400v-6" fill="#fff" stroke="#98a2b4" stroke-width="1"/><rect x="11.400" y="191.200" width="2.800" height="5.300" fill="#f0a020"/><rect x="15.600" y="184.600" width="2" height="3.600" fill="#c0503a"/><path d="M5.600 191.400l7.200-6.800 7.200 6.800" fill="none" stroke="#e8a020" stroke-width="2.300" stroke-linejoin="miter"/><path d="M26.300 205.600h11.400M26.600 205.600v11M27 211l11.600 7M27 211l10-5" fill="none" stroke="#4a4a4a" stroke-width="1.500"/><ellipse cx="26.300" cy="205.800" rx="2.200" ry="1.500" fill="#a8c8f0" stroke="#6a8ec8" stroke-width="0.500"/><ellipse cx="37.300" cy="205.800" rx="2.200" ry="1.500" fill="#a8c8f0" stroke="#6a8ec8" stroke-width="0.500"/><ellipse cx="26.500" cy="216.600" rx="2.200" ry="1.500" fill="#a8c8f0" stroke="#6a8ec8" stroke-width="0.500"/><rect x="29.500" y="207.500" width="4" height="5" fill="#d8dde8" stroke="#8a92a8" stroke-width="0.500"/><rect x="25" y="226" width="12.400" height="10.800" fill="#f4f7fc" stroke="#8f9fc4" stroke-width="0.900"/><rect x="25" y="226" width="12.400" height="2.600" fill="#6f8fd8"/><path d="M25 231.200h12.400M25 233.800h12.400M28.100 228.600v8.200M31.200 228.600v8.200M34.300 228.600v8.200" stroke="#a9b8d8" stroke-width="0.800"/><path d="M45.800 246.200v9.600c0 2.200 9.400 2.200 9.400 0v-9.600" fill="url(#cyl)" stroke="#c8960c" stroke-width="0.700"/><ellipse cx="50.500" cy="246.200" rx="4.700" ry="1.600" fill="#fbe28a" stroke="#c8960c" stroke-width="0.700"/><path d="M64 269.800l6 2 6-2v6l-6 3-6-3z" fill="#c87838" stroke="#9a5420" stroke-width="0.600"/><path d="M70 271.800v7" stroke="#9a5420" stroke-width="0.600"/><path d="M64 269.800l-1.200 2.200 6 2.200 1.200-2.400zM76 269.800l1.200 2.200-6 2.200-1.200-2.400z" fill="#e09858" stroke="#9a5420" stroke-width="0.500"/><path d="M64 269.800l2.500-2.400 3.500 1.200 3.500-1.200 2.500 2.400-6 2z" fill="#a86028"/><rect x="66" y="264.500" width="3.600" height="4.600" fill="#b8e0b0" stroke="#6a9a80" stroke-width="0.400" transform="rotate(-18 68 267)"/><rect x="69" y="266" width="4" height="4.600" fill="#c8dcf4" stroke="#7a90b8" stroke-width="0.400" transform="rotate(25 71 268)"/><path d="M66 288v9M66 289.500h4M66 296h4M64 292.500h6" fill="none" stroke="#3f6fc0" stroke-width="1"/><rect x="63.300" y="288" width="2.600" height="2" fill="#3f6fc0"/><rect x="63.300" y="291.500" width="2.600" height="2" fill="#3f6fc0"/><rect x="63.300" y="295" width="2.600" height="2" fill="#3f6fc0"/><rect x="70" y="287" width="5.400" height="4.200" rx="0.800" fill="#9fc0f4" stroke="#3f6fc0" stroke-width="0.800"/><rect x="70" y="293.800" width="5.400" height="4.200" rx="0.800" fill="#9fc0f4" stroke="#3f6fc0" stroke-width="0.800"/></svg>
<div class="t" style="top:180.00px;height:20px;line-height:20px;color:#1e1e1e;font-size:12px;white-space:nowrap;letter-spacing:-0.127px;left:24.20px;">Home</div>
<div class="t" style="top:200.50px;height:20px;line-height:20px;color:#1e1e1e;font-size:12px;white-space:nowrap;letter-spacing:0.031px;left:43.00px;">Model Assistant</div>
<svg style="left:0;top:0" width="1" height="1"><polygon points="7.55,231.35 14.95,231.35 11.25,235.54999999999998" fill="#333"/></svg>
<div class="t" style="top:220.50px;height:20px;line-height:20px;color:#1e1e1e;font-size:12px;white-space:nowrap;letter-spacing:0.079px;left:43.00px;">None</div>
<svg style="left:0;top:0" width="1" height="1"><polygon points="26.400000000000002,251.65 33.800000000000004,251.65 30.1,255.85" fill="#333"/></svg>
<div class="t" style="top:240.50px;height:20px;line-height:20px;color:#1e1e1e;font-size:12px;white-space:nowrap;letter-spacing:-0.096px;left:60.50px;">Database</div>
<div class="t" style="top:261.00px;height:20px;line-height:20px;color:#1e1e1e;font-size:12px;white-space:nowrap;transform:scaleX(0.9156);transform-origin:0 50%;left:81.75px;">Packages</div>
<svg style="left:0;top:0" width="1" height="1"><polygon points="45.8,291.75 53.2,291.75 49.5,295.95000000000005" fill="#333"/></svg>
<div style="left:78.75px;top:282px;width:82px;height:20.5px;border:1px solid #adadad;background:linear-gradient(#f2f2f2,#e4e4e4);"></div>
<div class="t" style="top:282.50px;height:20px;line-height:20px;color:#1e1e1e;font-size:12px;white-space:nowrap;transform:scaleX(0.9225);transform-origin:0 50%;left:84.50px;">All Classes</div>
<svg style="left:0;top:0" width="1" height="1"><polyline points="148.75,290.25 151.75,293.25 154.75,290.25" fill="none" stroke="#555" stroke-width="1"/></svg>
<svg style="left:81.5px;top:305.00px" width="14" height="15" viewBox="0 0 14 15"><path d="M1.5 0.8h8.5a1.2 1.2 0 0 1 1.2 1.2v6.8h1.8v3.4a1.2 1.2 0 0 1-1.2 1.2H1.5a1.2 1.2 0 0 1-1.2-1.2V2a1.2 1.2 0 0 1 1.2-1.2z" fill="#fff" stroke="#e3b98a" stroke-width="1.1"/></svg>
<div class="t" style="top:302.50px;height:20px;line-height:20px;color:#1e1e1e;font-size:12px;white-space:nowrap;left:98.75px;letter-spacing:-0.149px;">Category</div>
<svg style="left:81.5px;top:325.18px" width="14" height="15" viewBox="0 0 14 15"><path d="M1.5 0.8h8.5a1.2 1.2 0 0 1 1.2 1.2v6.8h1.8v3.4a1.2 1.2 0 0 1-1.2 1.2H1.5a1.2 1.2 0 0 1-1.2-1.2V2a1.2 1.2 0 0 1 1.2-1.2z" fill="#fff" stroke="#e3b98a" stroke-width="1.1"/></svg>
<div class="t" style="top:322.68px;height:20px;line-height:20px;color:#1e1e1e;font-size:12px;white-space:nowrap;left:98.75px;letter-spacing:-0.325px;">ChangeRequestProposal</div>
<div style="left:98.75px;top:343.86px;width:90px;height:18px;background:#e6e6e6;"></div>
<svg style="left:81.5px;top:345.36px" width="14" height="15" viewBox="0 0 14 15"><path d="M1.5 0.8h8.5a1.2 1.2 0 0 1 1.2 1.2v6.8h1.8v3.4a1.2 1.2 0 0 1-1.2 1.2H1.5a1.2 1.2 0 0 1-1.2-1.2V2a1.2 1.2 0 0 1 1.2-1.2z" fill="url(#fgr)" stroke="#e3b98a" stroke-width="1.1"/></svg>
<div class="t" style="top:342.86px;height:20px;line-height:20px;color:#1e1e1e;font-size:12px;white-space:nowrap;left:98.75px;letter-spacing:-0.393px;">Class_001  (2/2)</div>
<svg style="left:81.5px;top:365.54px" width="14" height="15" viewBox="0 0 14 15"><path d="M1.5 0.8h8.5a1.2 1.2 0 0 1 1.2 1.2v6.8h1.8v3.4a1.2 1.2 0 0 1-1.2 1.2H1.5a1.2 1.2 0 0 1-1.2-1.2V2a1.2 1.2 0 0 1 1.2-1.2z" fill="url(#fgr)" stroke="#e3b98a" stroke-width="1.1"/></svg>
<div class="t" style="top:363.04px;height:20px;line-height:20px;color:#1e1e1e;font-size:12px;white-space:nowrap;left:98.75px;letter-spacing:-0.033px;">Component  (2/2)</div>
<svg style="left:81.5px;top:385.72px" width="14" height="15" viewBox="0 0 14 15"><path d="M1.5 0.8h8.5a1.2 1.2 0 0 1 1.2 1.2v6.8h1.8v3.4a1.2 1.2 0 0 1-1.2 1.2H1.5a1.2 1.2 0 0 1-1.2-1.2V2a1.2 1.2 0 0 1 1.2-1.2z" fill="#fff" stroke="#e3b98a" stroke-width="1.1"/></svg>
<div class="t" style="top:383.22px;height:20px;line-height:20px;color:#1e1e1e;font-size:12px;white-space:nowrap;left:98.75px;letter-spacing:-0.229px;">Concern</div>
<svg style="left:81.5px;top:405.90px" width="14" height="15" viewBox="0 0 14 15"><path d="M1.5 0.8h8.5a1.2 1.2 0 0 1 1.2 1.2v6.8h1.8v3.4a1.2 1.2 0 0 1-1.2 1.2H1.5a1.2 1.2 0 0 1-1.2-1.2V2a1.2 1.2 0 0 1 1.2-1.2z" fill="#fff" stroke="#e3b98a" stroke-width="1.1"/></svg>
<div class="t" style="top:403.40px;height:20px;line-height:20px;color:#1e1e1e;font-size:12px;white-space:nowrap;left:98.75px;letter-spacing:-0.030px;">ConstraintDefinition</div>
<svg style="left:81.5px;top:426.08px" width="14" height="15" viewBox="0 0 14 15"><path d="M1.5 0.8h8.5a1.2 1.2 0 0 1 1.2 1.2v6.8h1.8v3.4a1.2 1.2 0 0 1-1.2 1.2H1.5a1.2 1.2 0 0 1-1.2-1.2V2a1.2 1.2 0 0 1 1.2-1.2z" fill="#fff" stroke="#e3b98a" stroke-width="1.1"/></svg>
<div class="t" style="top:423.58px;height:20px;line-height:20px;color:#1e1e1e;font-size:12px;white-space:nowrap;left:98.75px;letter-spacing:-0.116px;">DefinedTerm</div>
<svg style="left:81.5px;top:446.26px" width="14" height="15" viewBox="0 0 14 15"><path d="M1.5 0.8h8.5a1.2 1.2 0 0 1 1.2 1.2v6.8h1.8v3.4a1.2 1.2 0 0 1-1.2 1.2H1.5a1.2 1.2 0 0 1-1.2-1.2V2a1.2 1.2 0 0 1 1.2-1.2z" fill="#fff" stroke="#e3b98a" stroke-width="1.1"/></svg>
<div class="t" style="top:443.76px;height:20px;line-height:20px;color:#1e1e1e;font-size:12px;white-space:nowrap;left:98.75px;letter-spacing:0.039px;">Document</div>
<svg style="left:81.5px;top:466.44px" width="14" height="15" viewBox="0 0 14 15"><path d="M1.5 0.8h8.5a1.2 1.2 0 0 1 1.2 1.2v6.8h1.8v3.4a1.2 1.2 0 0 1-1.2 1.2H1.5a1.2 1.2 0 0 1-1.2-1.2V2a1.2 1.2 0 0 1 1.2-1.2z" fill="#fff" stroke="#e3b98a" stroke-width="1.1"/></svg>
<div class="t" style="top:463.94px;height:20px;line-height:20px;color:#1e1e1e;font-size:12px;white-space:nowrap;left:98.75px;letter-spacing:-0.123px;">DomainSet</div>
<svg style="left:81.5px;top:486.62px" width="14" height="15" viewBox="0 0 14 15"><path d="M1.5 0.8h8.5a1.2 1.2 0 0 1 1.2 1.2v6.8h1.8v3.4a1.2 1.2 0 0 1-1.2 1.2H1.5a1.2 1.2 0 0 1-1.2-1.2V2a1.2 1.2 0 0 1 1.2-1.2z" fill="#fff" stroke="#e3b98a" stroke-width="1.1"/></svg>
<div class="t" style="top:484.12px;height:20px;line-height:20px;color:#1e1e1e;font-size:12px;white-space:nowrap;left:98.75px;letter-spacing:-0.487px;">Event</div>
<svg style="left:81.5px;top:506.80px" width="14" height="15" viewBox="0 0 14 15"><path d="M1.5 0.8h8.5a1.2 1.2 0 0 1 1.2 1.2v6.8h1.8v3.4a1.2 1.2 0 0 1-1.2 1.2H1.5a1.2 1.2 0 0 1-1.2-1.2V2a1.2 1.2 0 0 1 1.2-1.2z" fill="#fff" stroke="#e3b98a" stroke-width="1.1"/></svg>
<div class="t" style="top:504.30px;height:20px;line-height:20px;color:#1e1e1e;font-size:12px;white-space:nowrap;left:98.75px;letter-spacing:-0.439px;">Exit</div>
<svg style="left:81.5px;top:526.98px" width="14" height="15" viewBox="0 0 14 15"><path d="M1.5 0.8h8.5a1.2 1.2 0 0 1 1.2 1.2v6.8h1.8v3.4a1.2 1.2 0 0 1-1.2 1.2H1.5a1.2 1.2 0 0 1-1.2-1.2V2a1.2 1.2 0 0 1 1.2-1.2z" fill="#fff" stroke="#e3b98a" stroke-width="1.1"/></svg>
<div class="t" style="top:524.48px;height:20px;line-height:20px;color:#1e1e1e;font-size:12px;white-space:nowrap;left:98.75px;letter-spacing:-0.334px;">ExternalFile</div>
<svg style="left:81.5px;top:547.16px" width="14" height="15" viewBox="0 0 14 15"><path d="M1.5 0.8h8.5a1.2 1.2 0 0 1 1.2 1.2v6.8h1.8v3.4a1.2 1.2 0 0 1-1.2 1.2H1.5a1.2 1.2 0 0 1-1.2-1.2V2a1.2 1.2 0 0 1 1.2-1.2z" fill="#fff" stroke="#e3b98a" stroke-width="1.1"/></svg>
<div class="t" style="top:544.66px;height:20px;line-height:20px;color:#1e1e1e;font-size:12px;white-space:nowrap;left:98.75px;letter-spacing:-0.072px;">Function</div>
<svg style="left:81.5px;top:567.34px" width="14" height="15" viewBox="0 0 14 15"><path d="M1.5 0.8h8.5a1.2 1.2 0 0 1 1.2 1.2v6.8h1.8v3.4a1.2 1.2 0 0 1-1.2 1.2H1.5a1.2 1.2 0 0 1-1.2-1.2V2a1.2 1.2 0 0 1 1.2-1.2z" fill="#fff" stroke="#e3b98a" stroke-width="1.1"/></svg>
<div class="t" style="top:564.84px;height:20px;line-height:20px;color:#1e1e1e;font-size:12px;white-space:nowrap;left:98.75px;letter-spacing:-0.047px;">Item</div>
<svg style="left:81.5px;top:587.52px" width="14" height="15" viewBox="0 0 14 15"><path d="M1.5 0.8h8.5a1.2 1.2 0 0 1 1.2 1.2v6.8h1.8v3.4a1.2 1.2 0 0 1-1.2 1.2H1.5a1.2 1.2 0 0 1-1.2-1.2V2a1.2 1.2 0 0 1 1.2-1.2z" fill="#fff" stroke="#e3b98a" stroke-width="1.1"/></svg>
<div class="t" style="top:585.02px;height:20px;line-height:20px;color:#1e1e1e;font-size:12px;white-space:nowrap;left:98.75px;letter-spacing:-0.191px;">Link</div>
<svg style="left:81.5px;top:607.70px" width="14" height="15" viewBox="0 0 14 15"><path d="M1.5 0.8h8.5a1.2 1.2 0 0 1 1.2 1.2v6.8h1.8v3.4a1.2 1.2 0 0 1-1.2 1.2H1.5a1.2 1.2 0 0 1-1.2-1.2V2a1.2 1.2 0 0 1 1.2-1.2z" fill="#fff" stroke="#e3b98a" stroke-width="1.1"/></svg>
<div class="t" style="top:605.20px;height:20px;line-height:20px;color:#1e1e1e;font-size:12px;white-space:nowrap;left:98.75px;letter-spacing:0.201px;">Mitigation Activity</div>
<svg style="left:81.5px;top:627.88px" width="14" height="15" viewBox="0 0 14 15"><path d="M1.5 0.8h8.5a1.2 1.2 0 0 1 1.2 1.2v6.8h1.8v3.4a1.2 1.2 0 0 1-1.2 1.2H1.5a1.2 1.2 0 0 1-1.2-1.2V2a1.2 1.2 0 0 1 1.2-1.2z" fill="#fff" stroke="#e3b98a" stroke-width="1.1"/></svg>
<div class="t" style="top:625.38px;height:20px;line-height:20px;color:#1e1e1e;font-size:12px;white-space:nowrap;left:98.75px;letter-spacing:0.158px;">Mode</div>
<svg style="left:81.5px;top:648.06px" width="14" height="15" viewBox="0 0 14 15"><path d="M1.5 0.8h8.5a1.2 1.2 0 0 1 1.2 1.2v6.8h1.8v3.4a1.2 1.2 0 0 1-1.2 1.2H1.5a1.2 1.2 0 0 1-1.2-1.2V2a1.2 1.2 0 0 1 1.2-1.2z" fill="#fff" stroke="#e3b98a" stroke-width="1.1"/></svg>
<div class="t" style="top:645.56px;height:20px;line-height:20px;color:#1e1e1e;font-size:12px;white-space:nowrap;left:98.75px;letter-spacing:-0.465px;">MyClass</div>
<svg style="left:81.5px;top:668.24px" width="14" height="15" viewBox="0 0 14 15"><path d="M1.5 0.8h8.5a1.2 1.2 0 0 1 1.2 1.2v6.8h1.8v3.4a1.2 1.2 0 0 1-1.2 1.2H1.5a1.2 1.2 0 0 1-1.2-1.2V2a1.2 1.2 0 0 1 1.2-1.2z" fill="#fff" stroke="#e3b98a" stroke-width="1.1"/></svg>
<div class="t" style="top:665.74px;height:20px;line-height:20px;color:#1e1e1e;font-size:12px;white-space:nowrap;left:98.75px;letter-spacing:0.051px;">Note</div>
<svg style="left:81.5px;top:688.42px" width="14" height="15" viewBox="0 0 14 15"><path d="M1.5 0.8h8.5a1.2 1.2 0 0 1 1.2 1.2v6.8h1.8v3.4a1.2 1.2 0 0 1-1.2 1.2H1.5a1.2 1.2 0 0 1-1.2-1.2V2a1.2 1.2 0 0 1 1.2-1.2z" fill="#fff" stroke="#e3b98a" stroke-width="1.1"/></svg>
<div class="t" style="top:685.92px;height:20px;line-height:20px;color:#1e1e1e;font-size:12px;white-space:nowrap;left:98.75px;letter-spacing:0.009px;">Organization</div>
<svg style="left:81.5px;top:708.60px" width="14" height="15" viewBox="0 0 14 15"><path d="M1.5 0.8h8.5a1.2 1.2 0 0 1 1.2 1.2v6.8h1.8v3.4a1.2 1.2 0 0 1-1.2 1.2H1.5a1.2 1.2 0 0 1-1.2-1.2V2a1.2 1.2 0 0 1 1.2-1.2z" fill="#fff" stroke="#e3b98a" stroke-width="1.1"/></svg>
<div class="t" style="top:706.10px;height:20px;line-height:20px;color:#1e1e1e;font-size:12px;white-space:nowrap;left:98.75px;letter-spacing:-0.521px;">Package</div>
<svg style="left:81.5px;top:728.78px" width="14" height="15" viewBox="0 0 14 15"><path d="M1.5 0.8h8.5a1.2 1.2 0 0 1 1.2 1.2v6.8h1.8v3.4a1.2 1.2 0 0 1-1.2 1.2H1.5a1.2 1.2 0 0 1-1.2-1.2V2a1.2 1.2 0 0 1 1.2-1.2z" fill="#fff" stroke="#e3b98a" stroke-width="1.1"/></svg>
<div class="t" style="top:726.28px;height:20px;line-height:20px;color:#1e1e1e;font-size:12px;white-space:nowrap;left:98.75px;letter-spacing:-0.240px;">Port</div>
<svg style="left:81.5px;top:748.96px" width="14" height="15" viewBox="0 0 14 15"><path d="M1.5 0.8h8.5a1.2 1.2 0 0 1 1.2 1.2v6.8h1.8v3.4a1.2 1.2 0 0 1-1.2 1.2H1.5a1.2 1.2 0 0 1-1.2-1.2V2a1.2 1.2 0 0 1 1.2-1.2z" fill="#fff" stroke="#e3b98a" stroke-width="1.1"/></svg>
<div class="t" style="top:746.46px;height:20px;line-height:20px;color:#1e1e1e;font-size:12px;white-space:nowrap;left:98.75px;letter-spacing:0.087px;">PortDefinition</div>
<svg style="left:81.5px;top:769.14px" width="14" height="15" viewBox="0 0 14 15"><path d="M1.5 0.8h8.5a1.2 1.2 0 0 1 1.2 1.2v6.8h1.8v3.4a1.2 1.2 0 0 1-1.2 1.2H1.5a1.2 1.2 0 0 1-1.2-1.2V2a1.2 1.2 0 0 1 1.2-1.2z" fill="#fff" stroke="#e3b98a" stroke-width="1.1"/></svg>
<div class="t" style="top:766.64px;height:20px;line-height:20px;color:#1e1e1e;font-size:12px;white-space:nowrap;left:98.75px;letter-spacing:-0.015px;">Product</div>
<svg style="left:81.5px;top:789.32px" width="14" height="15" viewBox="0 0 14 15"><path d="M1.5 0.8h8.5a1.2 1.2 0 0 1 1.2 1.2v6.8h1.8v3.4a1.2 1.2 0 0 1-1.2 1.2H1.5a1.2 1.2 0 0 1-1.2-1.2V2a1.2 1.2 0 0 1 1.2-1.2z" fill="#fff" stroke="#e3b98a" stroke-width="1.1"/></svg>
<div class="t" style="top:786.82px;height:20px;line-height:20px;color:#1e1e1e;font-size:12px;white-space:nowrap;left:98.75px;letter-spacing:0.141px;">ProgramActivity</div>
<svg style="left:81.5px;top:809.50px" width="14" height="15" viewBox="0 0 14 15"><path d="M1.5 0.8h8.5a1.2 1.2 0 0 1 1.2 1.2v6.8h1.8v3.4a1.2 1.2 0 0 1-1.2 1.2H1.5a1.2 1.2 0 0 1-1.2-1.2V2a1.2 1.2 0 0 1 1.2-1.2z" fill="#fff" stroke="#e3b98a" stroke-width="1.1"/></svg>
<div class="t" style="top:807.00px;height:20px;line-height:20px;color:#1e1e1e;font-size:12px;white-space:nowrap;left:98.75px;letter-spacing:-0.315px;">ProgramElement</div>
<svg style="left:81.5px;top:829.68px" width="14" height="15" viewBox="0 0 14 15"><path d="M1.5 0.8h8.5a1.2 1.2 0 0 1 1.2 1.2v6.8h1.8v3.4a1.2 1.2 0 0 1-1.2 1.2H1.5a1.2 1.2 0 0 1-1.2-1.2V2a1.2 1.2 0 0 1 1.2-1.2z" fill="#fff" stroke="#e3b98a" stroke-width="1.1"/></svg>
<div class="t" style="top:827.18px;height:20px;line-height:20px;color:#1e1e1e;font-size:12px;white-space:nowrap;left:98.75px;letter-spacing:-0.109px;">Requirement</div>
<svg style="left:81.5px;top:849.86px" width="14" height="15" viewBox="0 0 14 15"><path d="M1.5 0.8h8.5a1.2 1.2 0 0 1 1.2 1.2v6.8h1.8v3.4a1.2 1.2 0 0 1-1.2 1.2H1.5a1.2 1.2 0 0 1-1.2-1.2V2a1.2 1.2 0 0 1 1.2-1.2z" fill="#fff" stroke="#e3b98a" stroke-width="1.1"/></svg>
<div class="t" style="top:847.36px;height:20px;line-height:20px;color:#1e1e1e;font-size:12px;white-space:nowrap;left:98.75px;letter-spacing:-0.214px;">RequirementGroup</div>
<svg style="left:81.5px;top:870.04px" width="14" height="15" viewBox="0 0 14 15"><path d="M1.5 0.8h8.5a1.2 1.2 0 0 1 1.2 1.2v6.8h1.8v3.4a1.2 1.2 0 0 1-1.2 1.2H1.5a1.2 1.2 0 0 1-1.2-1.2V2a1.2 1.2 0 0 1 1.2-1.2z" fill="#fff" stroke="#e3b98a" stroke-width="1.1"/></svg>
<div class="t" style="top:867.54px;height:20px;line-height:20px;color:#1e1e1e;font-size:12px;white-space:nowrap;left:98.75px;letter-spacing:-0.482px;">Resource</div>
<svg style="left:81.5px;top:890.22px" width="14" height="15" viewBox="0 0 14 15"><path d="M1.5 0.8h8.5a1.2 1.2 0 0 1 1.2 1.2v6.8h1.8v3.4a1.2 1.2 0 0 1-1.2 1.2H1.5a1.2 1.2 0 0 1-1.2-1.2V2a1.2 1.2 0 0 1 1.2-1.2z" fill="#fff" stroke="#e3b98a" stroke-width="1.1"/></svg>
<div class="t" style="top:887.72px;height:20px;line-height:20px;color:#1e1e1e;font-size:12px;white-space:nowrap;left:98.75px;letter-spacing:-0.645px;">Risk</div>
<svg style="left:81.5px;top:910.40px" width="14" height="15" viewBox="0 0 14 15"><path d="M1.5 0.8h8.5a1.2 1.2 0 0 1 1.2 1.2v6.8h1.8v3.4a1.2 1.2 0 0 1-1.2 1.2H1.5a1.2 1.2 0 0 1-1.2-1.2V2a1.2 1.2 0 0 1 1.2-1.2z" fill="#fff" stroke="#e3b98a" stroke-width="1.1"/></svg>
<div class="t" style="top:907.90px;height:20px;line-height:20px;color:#1e1e1e;font-size:12px;white-space:nowrap;left:98.75px;letter-spacing:-0.388px;">ServiceSpecification</div>
<svg style="left:81.5px;top:930.58px" width="14" height="15" viewBox="0 0 14 15"><path d="M1.5 0.8h8.5a1.2 1.2 0 0 1 1.2 1.2v6.8h1.8v3.4a1.2 1.2 0 0 1-1.2 1.2H1.5a1.2 1.2 0 0 1-1.2-1.2V2a1.2 1.2 0 0 1 1.2-1.2z" fill="#fff" stroke="#e3b98a" stroke-width="1.1"/></svg>
<div class="t" style="top:928.08px;height:20px;line-height:20px;color:#1e1e1e;font-size:12px;white-space:nowrap;left:98.75px;letter-spacing:-0.454px;">State</div>
</div></div>
<svg style="left:0;top:0" width="1" height="1"><polygon points="148,166.0 156,166.0 152,170.5" fill="#222"/></svg>
<svg style="left:166.5px;top:161.5px" width="9" height="12" viewBox="0 0 9 12"><path d="M2.5 0.5h4v6h-4z M0.8 6.5h7.4 M4.5 6.5v5" fill="none" stroke="#222" stroke-width="1.1"/><path d="M5.2 0.5h1.3v6h-1.3z" fill="#222"/></svg>
<svg style="left:183.5px;top:163.0px" width="9" height="9" viewBox="0 0 9 9"><path d="M0.5 0.5l8 8M8.5 0.5l-8 8" stroke="#222" stroke-width="1.4" fill="none"/></svg>
<div style="left:206.5px;top:155px;width:210.5px;height:813px;border:1px solid #b0b0b0;background:#f0f0f0;"></div>
<div style="left:207.5px;top:156px;width:208.5px;height:1px;background:#fafafa;"></div>
<div class="t" style="top:157.50px;height:20px;line-height:20px;color:#1e1e1e;font-size:12px;white-space:nowrap;letter-spacing:-0.323px;left:213.75px;">Browser</div>
<svg style="left:0;top:0" width="1" height="1"><polygon points="362,166.0 370,166.0 366,170.5" fill="#222"/></svg>
<svg style="left:381px;top:161.5px" width="9" height="12" viewBox="0 0 9 12"><path d="M2.5 0.5h4v6h-4z M0.8 6.5h7.4 M4.5 6.5v5" fill="none" stroke="#222" stroke-width="1.1"/><path d="M5.2 0.5h1.3v6h-1.3z" fill="#222"/></svg>
<svg style="left:398.0px;top:163.0px" width="9" height="9" viewBox="0 0 9 9"><path d="M0.5 0.5l8 8M8.5 0.5l-8 8" stroke="#222" stroke-width="1.4" fill="none"/></svg>
<div style="left:211.5px;top:182px;width:156px;height:18.5px;border:1px solid #abadb3;background:#fff;"></div>
<div style="left:373.75px;top:182px;width:38px;height:18.5px;border:1px solid #adadad;background:#efefef;"></div>
<div class="t" style="top:181.50px;height:20px;line-height:20px;color:#848484;font-size:12px;white-space:nowrap;letter-spacing:-0.090px;left:242.75px;width:300px;text-align:center;">Create</div>
<div style="left:208.5px;top:203.5px;width:206.5px;height:713.5px;border:1px solid #b4b4b4;background:#fff;"></div>
<div style="left:211px;top:206.5px;width:201.75px;height:17.5px;border:1px solid #e3e3e3;background:#f5f5f5;"></div>
<div class="t" style="top:205.50px;height:20px;line-height:20px;color:#1e1e1e;font-size:12px;white-space:nowrap;transform:scaleX(0.9362);transform-origin:0 50%;left:215.50px;">XX.999 DZ0</div>
<div class="t" style="top:225.00px;height:20px;line-height:20px;color:#1e1e1e;font-size:12px;white-space:nowrap;letter-spacing:-0.207px;left:215.50px;">XX.999 ʭ00</div>
<div class="t" style="top:920.25px;height:20px;line-height:20px;color:#1e1e1e;font-size:12px;white-space:nowrap;letter-spacing:-0.067px;left:213.75px;">Filter</div>
<div class="t" style="top:945.25px;height:20px;line-height:20px;color:#1e1e1e;font-size:12px;white-space:nowrap;letter-spacing:-0.083px;left:213.75px;">Sort</div>
<div style="left:246.75px;top:919.75px;width:165.75px;height:20px;border:1px solid #adadad;background:linear-gradient(#f3f3f3,#e6e6e6);"></div>
<div class="t" style="top:920.00px;height:20px;line-height:20px;color:#1e1e1e;font-size:12px;white-space:nowrap;letter-spacing:-0.106px;left:253.25px;">All Entities</div>
<svg style="left:0;top:0" width="1" height="1"><polyline points="400.25,927.75 403.25,930.75 406.25,927.75" fill="none" stroke="#555" stroke-width="1"/></svg>
<div style="left:246.75px;top:944.5px;width:165.75px;height:20px;border:1px solid #adadad;background:linear-gradient(#f3f3f3,#e6e6e6);"></div>
<div class="t" style="top:944.75px;height:20px;line-height:20px;color:#1e1e1e;font-size:12px;white-space:nowrap;letter-spacing:0.011px;left:253.25px;">Numeric</div>
<svg style="left:0;top:0" width="1" height="1"><polyline points="400.25,952.5 403.25,955.5 406.25,952.5" fill="none" stroke="#555" stroke-width="1"/></svg>
<div style="left:421px;top:155px;width:1039px;height:22.5px;background:#2b579a;"></div>
<div class="t" style="top:156.25px;height:20px;line-height:20px;color:#fff;font-size:12px;white-space:nowrap;letter-spacing:-0.138px;font-weight:bold;left:425.75px;">DZ0 asPropertySheet</div>
<div style="left:421px;top:177px;width:1039px;height:792px;background:#f0f0f0;border-left:1px solid #a8a8a8;"></div>
<div style="left:424px;top:179px;width:1040px;height:762px;background:#f9f9f9;border:1px solid #c4c4c4;"></div>
<div style="left:529px;top:181px;width:940px;height:736px;background:#f6f6f6;"></div>
<div style="left:425px;top:180px;width:1035px;height:737px;overflow:hidden;"><div style="left:-425px;top:-180px;width:1460px;height:992px;">
<div class="t" style="top:189.00px;height:20px;line-height:20px;color:#1e1e1e;font-size:12px;white-space:nowrap;letter-spacing:0.184px;left:427.50px;">NumAttrib</div>
<div class="t" style="top:216.00px;height:20px;line-height:20px;color:#1e1e1e;font-size:12px;white-space:nowrap;letter-spacing:-0.019px;left:427.50px;">Collection</div>
<div class="t" style="top:390.00px;height:20px;line-height:20px;color:#1e1e1e;font-size:12px;white-space:nowrap;transform:scaleX(0.9331);transform-origin:0 50%;left:427.50px;">Enum</div>
<div class="t" style="top:417.00px;height:20px;line-height:20px;color:#1e1e1e;font-size:12px;white-space:nowrap;letter-spacing:-0.119px;left:427.50px;">Enumstring</div>
<div class="t" style="top:443.50px;height:20px;line-height:20px;color:#1e1e1e;font-size:12px;white-space:nowrap;transform:scaleX(0.9315);transform-origin:0 50%;left:427.50px;">Text</div>
<div class="t" style="top:617.75px;height:20px;line-height:20px;color:#1e1e1e;font-size:12px;white-space:nowrap;letter-spacing:-0.048px;left:427.50px;">HierNum</div>
<div class="t" style="top:644.75px;height:20px;line-height:20px;color:#1e1e1e;font-size:12px;white-space:nowrap;transform:scaleX(0.8939);transform-origin:0 50%;left:427.50px;">IsTrue</div>
<div class="t" style="top:671.50px;height:20px;line-height:20px;color:#1e1e1e;font-size:12px;white-space:nowrap;transform:scaleX(0.8662);transform-origin:0 50%;left:427.50px;">IsFalse</div>
<div class="t" style="top:698.50px;height:20px;line-height:20px;color:#1e1e1e;font-size:12px;white-space:nowrap;letter-spacing:-0.167px;left:427.50px;">MyText</div>
<div class="t" style="top:872.00px;height:20px;line-height:20px;color:#1e1e1e;font-size:12px;white-space:nowrap;letter-spacing:-0.175px;left:427.50px;">ConstNumberSpec</div>
<div class="t" style="top:899.00px;height:20px;line-height:20px;color:#1e1e1e;font-size:12px;white-space:nowrap;letter-spacing:-0.307px;left:427.50px;">RandNumSpec</div>
<div style="left:530px;top:190px;width:940px;height:19.5px;border:1px solid #dcdcdc;background:#fcfcfc;"></div>
<div class="t" style="top:189.50px;height:20px;line-height:20px;color:#7d7d7d;font-size:12px;white-space:nowrap;letter-spacing:-0.274px;left:533.75px;">12345.00000000</div>
<div style="left:530px;top:217px;width:940px;height:168.5px;border:1px solid #abadb3;background:#fff;"></div>
<div class="t" style="top:220.00px;height:20px;line-height:20px;color:#1e1e1e;font-size:12px;white-space:nowrap;left:537.50px;">ż</div>
<div class="t" style="top:239.00px;height:20px;line-height:20px;color:#1e1e1e;font-size:12px;white-space:nowrap;left:537.50px;">Ž</div>
<div class="t" style="top:257.50px;height:20px;line-height:20px;color:#1e1e1e;font-size:12px;white-space:nowrap;letter-spacing:-0.311px;left:537.50px;">ʪ0000000000</div>
<div style="left:530px;top:391px;width:940px;height:21px;border:1px solid #adadad;background:linear-gradient(#f3f3f3,#e5e5e5);"></div>
<div class="t" style="top:392.00px;height:20px;line-height:20px;color:#1e1e1e;font-size:12px;white-space:nowrap;left:536.75px;">1</div>
<div style="left:530px;top:418px;width:940px;height:21px;border:1px solid #adadad;background:linear-gradient(#f3f3f3,#e5e5e5);"></div>
<div class="t" style="top:419.00px;height:20px;line-height:20px;color:#1e1e1e;font-size:12px;white-space:nowrap;transform:scaleX(0.7964);transform-origin:0 50%;left:536.75px;">BB</div>
<div style="left:530px;top:445px;width:940px;height:168px;border:1px solid #7eb4ea;background:#fff;"></div>
<div class="t" style="top:444.50px;height:20px;line-height:20px;color:#1e1e1e;font-size:12px;white-space:nowrap;transform:scaleX(0.8562);transform-origin:0 50%;left:536.40px;">XXXXXXXXXXXXXXXXXXXXXXXXXXXX</div>
<div style="left:530px;top:619px;width:940px;height:17px;border:1px solid #abadb3;background:#fff;"></div>
<div class="t" style="top:618.00px;height:20px;line-height:20px;color:#1e1e1e;font-size:12px;white-space:nowrap;transform:scaleX(0.8861);transform-origin:0 50%;left:533.00px;">9.9.X.XXXXX</div>
<div style="left:530px;top:700px;width:940px;height:167.5px;border:1px solid #abadb3;background:#fff;"></div>
<div class="t" style="top:699.50px;height:20px;line-height:20px;color:#1e1e1e;font-size:12px;white-space:nowrap;transform:scaleX(0.8620);transform-origin:0 50%;left:536.40px;">XXXXXXXXXXXXXXXXXXXXXXXXXXXXXXXXXX</div>
<div style="left:530px;top:874.5px;width:940px;height:18.0px;border:1px solid #dcdcdc;background:#fcfcfc;"></div>
<div class="t" style="top:873.00px;height:20px;line-height:20px;color:#7d7d7d;font-size:12px;white-space:nowrap;letter-spacing:-0.274px;left:533.75px;">98752.00000000</div>
<div style="left:530px;top:900.5px;width:940px;height:19.5px;border:1px solid #dcdcdc;background:#fcfcfc;"></div>
<div class="t" style="top:900.00px;height:20px;line-height:20px;color:#7d7d7d;font-size:12px;white-space:nowrap;letter-spacing:-0.173px;left:533.75px;">Normal (μ: 1, stdDev: 55, stream: 17)</div>
<div style="left:427px;top:183px;width:1040px;height:733.5px;border:1px dotted #606060;"></div>
</div></div>
<div style="left:425px;top:919px;width:1035px;height:1px;background:#c6c6c6;"></div>
<div style="left:425px;top:941px;width:1035px;height:6px;background:#e8e8e8;"></div>
<div style="left:425px;top:917px;width:67px;height:23.5px;background:#fff;border:1px solid #b0b0b0;border-top:none;"></div>
<div class="t" style="top:921.00px;height:20px;line-height:20px;color:#1e1e1e;font-size:12px;white-space:nowrap;letter-spacing:0.181px;left:432.00px;">Attributes</div>
<div style="left:492.5px;top:919.75px;width:63.75px;height:18.75px;border:1px solid #adadad;background:linear-gradient(#f3f3f3,#e4e4e4);"></div>
<div class="t" style="top:920.00px;height:20px;line-height:20px;color:#1e1e1e;font-size:12px;white-space:nowrap;letter-spacing:-0.094px;left:497.00px;">Properties</div>
<div style="left:557.5px;top:919.75px;width:70.5px;height:18.75px;border:1px solid #adadad;background:linear-gradient(#f3f3f3,#e4e4e4);"></div>
<div class="t" style="top:920.00px;height:20px;line-height:20px;color:#1e1e1e;font-size:12px;white-space:nowrap;letter-spacing:-0.327px;left:563.25px;">Parameters</div>
<div style="left:628.75px;top:919.75px;width:72.5px;height:18.75px;border:1px solid #adadad;background:linear-gradient(#f3f3f3,#e4e4e4);"></div>
<div class="t" style="top:920.00px;height:20px;line-height:20px;color:#1e1e1e;font-size:12px;white-space:nowrap;letter-spacing:-0.093px;left:634.50px;">Diagnostics</div>
<div style="left:702.5px;top:919.75px;width:41.0px;height:18.75px;border:1px solid #adadad;background:linear-gradient(#f3f3f3,#e4e4e4);"></div>
<div class="t" style="top:920.00px;height:20px;line-height:20px;color:#1e1e1e;font-size:12px;white-space:nowrap;transform:scaleX(0.9279);transform-origin:0 50%;left:708.50px;">Views</div>
<div style="left:421px;top:947px;width:1039px;height:22px;background:#f7f7f7;border-top:1px solid #b0b0b0;"></div>
<div style="left:422px;top:946.5px;width:87px;height:22px;background:#f5f5f5;border:1px solid #b0b0b0;border-top:none;"></div>
<div class="t" style="top:949.00px;height:20px;line-height:20px;color:#1e1e1e;font-size:12px;white-space:nowrap;letter-spacing:-0.144px;left:447.50px;">Properties</div>
<div style="left:509.5px;top:947.75px;width:62.25px;height:18.5px;border:1px solid #adadad;background:linear-gradient(#f3f3f3,#e4e4e4);"></div>
<div class="t" style="top:948.00px;height:20px;line-height:20px;color:#1e1e1e;font-size:12px;white-space:nowrap;letter-spacing:-0.240px;left:531.75px;">Spider</div>
<div style="left:573px;top:947.75px;width:79px;height:18.5px;border:1px solid #adadad;background:linear-gradient(#f3f3f3,#e4e4e4);"></div>
<div class="t" style="top:948.00px;height:20px;line-height:20px;color:#1e1e1e;font-size:12px;white-space:nowrap;letter-spacing:-0.149px;left:596.25px;">Hierarchy</div>
<svg style="left:0;top:0" width="700" height="992" viewBox="0 0 700 992"><rect x="429.500" y="954" width="13" height="11.600" fill="#fff" stroke="#7f8aa0" stroke-width="0.900"/><path d="M431.500 957.500h1.500M434 957.500h6.500M431.500 960h1.500M434 960h6.500M431.500 962.500h1.500M434 962.500h6.500" stroke="#8f9bb5" stroke-width="0.900"/><path d="M434 954.500l3-3 4.500 .5 1.500 1.500-1 2-4 .5z" fill="#e8b030" stroke="#b07808" stroke-width="0.500"/><rect x="443" y="950.800" width="1.800" height="5.500" fill="#2a9a3a"/><path d="M518 953l7 8M526 953l-9 8M518 957h8" stroke="#4a7ad0" stroke-width="0.900" fill="none"/><rect x="514" y="950.8" width="5" height="3.6" rx="0.600" fill="#f5d060" stroke="#c09820" stroke-width="0.700"/><rect x="523.5" y="950.8" width="5" height="3.6" rx="0.600" fill="#f5d060" stroke="#c09820" stroke-width="0.700"/><rect x="518.5" y="955.2" width="5" height="3.6" rx="0.600" fill="#f5d060" stroke="#c09820" stroke-width="0.700"/><rect x="514" y="960" width="5" height="3.6" rx="0.600" fill="#f5d060" stroke="#c09820" stroke-width="0.700"/><rect x="524" y="960" width="5" height="3.6" rx="0.600" fill="#f5d060" stroke="#c09820" stroke-width="0.700"/><path d="M585.400 955.500v2.500M582 960v-2h7v2" stroke="#4a7ad0" stroke-width="1" fill="none"/><rect x="583" y="951.6" width="4.8" height="3.8" rx="0.600" fill="#f5d060" stroke="#c09820" stroke-width="0.700"/><rect x="579.8" y="959.4" width="4.6" height="3.6" rx="0.600" fill="#f5d060" stroke="#c09820" stroke-width="0.700"/><rect x="586.6" y="959.4" width="4.6" height="3.6" rx="0.600" fill="#f5d060" stroke="#c09820" stroke-width="0.700"/></svg>
<div style="left:1px;top:969px;width:1459px;height:21.5px;background:#f0f0f0;border-top:1px solid #b5b5b5;"></div>
<div style="left:99.0px;top:972px;width:1px;height:16.5px;background:#8f8f8f;"></div>
<div style="left:182.0px;top:972px;width:1px;height:16.5px;background:#8f8f8f;"></div>
<div style="left:326.25px;top:972px;width:1px;height:16.5px;background:#8f8f8f;"></div>
<div class="t" style="top:971.00px;height:20px;line-height:20px;color:#1e1e1e;font-size:12px;white-space:nowrap;letter-spacing:-0.204px;left:4.50px;">Repository: Local</div>
<div class="t" style="top:971.00px;height:20px;line-height:20px;color:#1e1e1e;font-size:12px;white-space:nowrap;letter-spacing:-0.093px;left:105.50px;">Project: None</div>
<div class="t" style="top:971.00px;height:20px;line-height:20px;color:#1e1e1e;font-size:12px;white-space:nowrap;letter-spacing:0.020px;left:188.25px;">Username: Administrator</div>
<div class="t" style="top:971.00px;height:20px;line-height:20px;color:#1e1e1e;font-size:12px;white-space:nowrap;letter-spacing:0.098px;left:332.00px;">Authentication Mode:</div>
<div class="t" style="top:971.00px;height:20px;line-height:20px;color:#1e1e1e;font-size:12px;white-space:nowrap;transform:scaleX(0.8410);transform-origin:0 50%;left:451.30px;">GENESYS</div>
</body></html>
